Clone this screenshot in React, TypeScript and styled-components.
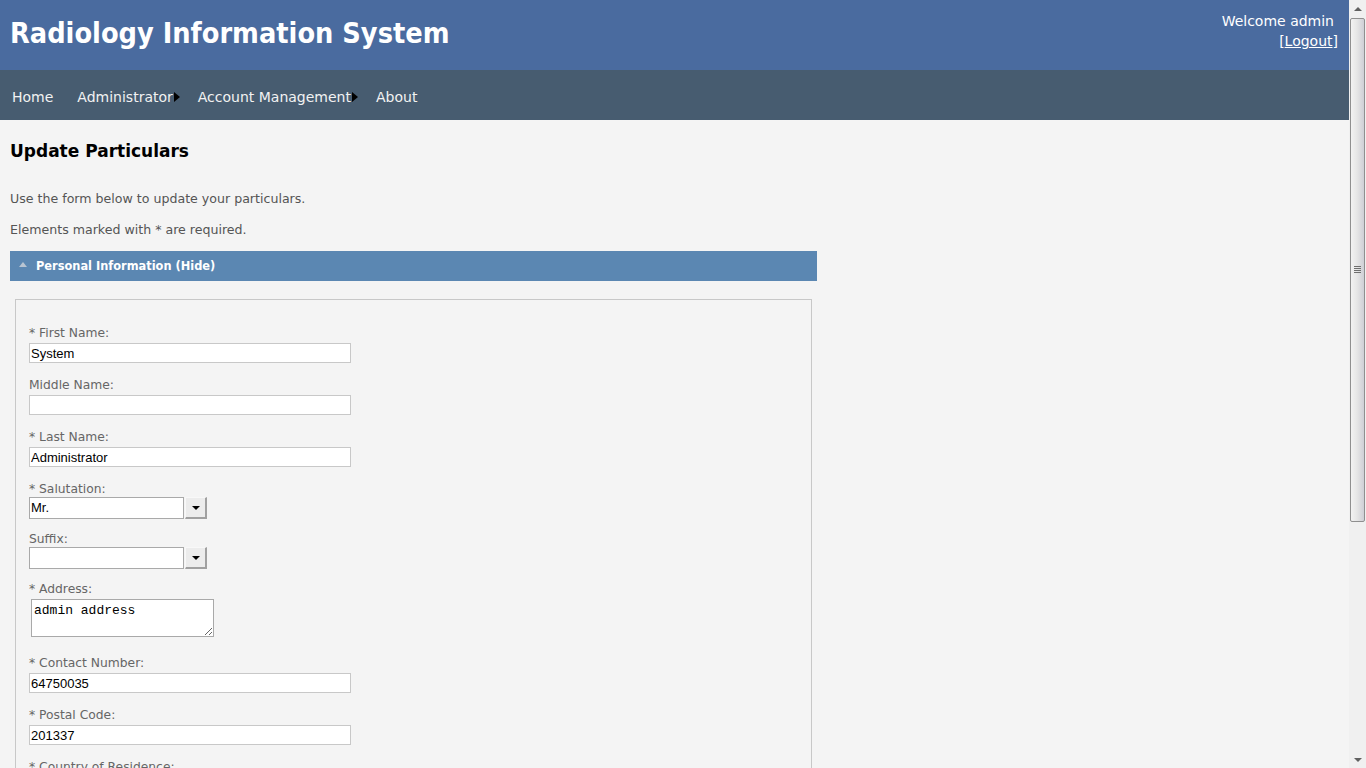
import React from "react";
import styled, { createGlobalStyle } from "styled-components";

const Global = createGlobalStyle`
  html, body { margin: 0; padding: 0; background: #f4f4f4; }
  body { font-family: "DejaVu Sans", Verdana, sans-serif; }
  * { box-sizing: border-box; }
`;

const Frame = styled.div`
  display: flex;
  align-items: flex-start;
`;

const Page = styled.div`
  flex: 1;
  min-width: 0;
`;

const Scrollbar = styled.div`
  position: sticky;
  top: 0;
  width: 17px;
  height: 100vh;
  background: #f0f0f0;
  display: flex;
  flex-direction: column;
`;

const ArrowBtn = styled.div<{ $down?: boolean }>`
  height: 17px;
  display: flex;
  align-items: center;
  justify-content: center;
  &::after {
    content: "";
    border-left: 4px solid transparent;
    border-right: 4px solid transparent;
    ${(p) =>
      p.$down
        ? "border-top: 4px solid #606060;"
        : "border-bottom: 4px solid #606060;"}
  }
`;

const Thumb = styled.div`
  margin: 1px 1px 0 1px;
  height: 504px;
  border: 1px solid #8f8f8f;
  border-radius: 2px;
  background: linear-gradient(to right, #f2f2f2 0%, #e6e6e6 45%, #cfcfd6 100%);
  display: flex;
  align-items: center;
  justify-content: center;
`;

const Grip = styled.div`
  width: 7px;
  height: 8px;
  background: repeating-linear-gradient(
    to bottom,
    #6e6e6e 0px,
    #6e6e6e 1px,
    transparent 1px,
    transparent 2px
  );
`;

const Track = styled.div`
  flex: 1;
`;

const Header = styled.header`
  height: 70px;
  background: #4a6b9f;
  display: flex;
  justify-content: space-between;
  align-items: flex-start;
  padding: 0 15px 0 10px;
`;

const Title = styled.h1`
  margin: 0;
  padding-top: 14px;
  font-family: "DejaVu Sans Condensed", "DejaVu Sans", sans-serif;
  font-stretch: condensed;
  font-size: 28.6px;
  line-height: 38px;
  font-weight: bold;
  color: #fff;
`;

const UserBox = styled.div`
  padding-top: 11px;
  display: flex;
  flex-direction: column;
  align-items: flex-end;
  color: #fff;
  font-size: 14px;
  line-height: 20px;
`;

const Logout = styled.a`
  color: #fff;
  margin-right: -4px;
  text-decoration: none;
  span { text-decoration: underline; }
`;

const Nav = styled.nav`
  height: 50px;
  background: #475c70;
  display: flex;
  align-items: center;
  padding: 4px 0 0 12px;
`;

const NavItem = styled.a<{ $sub?: boolean }>`
  color: #f2f2f2;
  font-size: 14px;
  display: flex;
  align-items: center;
  text-decoration: none;
  margin-right: ${(p) => (p.$sub ? 18 : 24)}px;
  &::after {
    content: "";
    display: ${(p) => (p.$sub ? "block" : "none")};
    margin-left: 1px;
    border-left: 6px solid #000;
    border-top: 5px solid transparent;
    border-bottom: 5px solid transparent;
  }
`;

const Main = styled.main`
  width: 817px;
  padding: 16px 0 40px 10px;
`;

const PageTitle = styled.h2`
  margin: 0;
  font-size: 17px;
  line-height: 30px;
  font-weight: bold;
  color: #000;
`;

const Intro = styled.p`
  margin: 0;
  font-size: 12.6px;
  line-height: 31px;
  color: #555;
`;

const FirstIntro = styled(Intro)`
  margin-top: 17px;
`;

const SectionBar = styled.div`
  margin-top: 6px;
  height: 30px;
  background: #5b87b2;
  display: flex;
  align-items: center;
  padding-left: 9px;
  gap: 9px;
  color: #fff;
  font-size: 11.4px;
  font-weight: bold;
  &::before {
    content: "";
    border-bottom: 5px solid #b8c4d2;
    border-left: 4px solid transparent;
    border-right: 4px solid transparent;
    margin-top: -4px;
  }
`;

const FieldSet = styled.div`
  margin: 18px 5px 0 5px;
  border: 1px solid #c8c8c8;
  border-bottom: none;
  padding: 21px 13px 0 13px;
  min-height: 700px;
`;

const Field = styled.div<{ $gap: number }>`
  margin-bottom: ${(p) => p.$gap}px;
`;

const Label = styled.label`
  display: block;
  height: 22px;
  line-height: 24px;
  font-size: 12.3px;
  color: #666;
`;

const TextInput = styled.input`
  display: block;
  width: 322px;
  height: 20px;
  border: 1px solid #c8c8c8;
  background: #fff;
  padding: 0 1px;
  font-family: "Liberation Sans", Arial, sans-serif;
  font-size: 13px;
  color: #000;
  outline: none;
`;

const SelectWrap = styled.div`
  display: flex;
  height: 22px;
  margin-top: -2px;
`;

const SelectBox = styled.div`
  width: 155px;
  height: 22px;
  background: #fff;
  border: 1px solid #a9a9a9;
  font-family: "Liberation Sans", Arial, sans-serif;
  font-size: 13px;
  line-height: 20px;
  padding-left: 1px;
  color: #000;
`;

const SelectButton = styled.div`
  width: 22px;
  height: 22px;
  margin-left: 1px;
  background: #ececec;
  border-right: 2px solid #a0a0a0;
  border-bottom: 2px solid #a0a0a0;
  border-top: 1px solid #f8f8f8;
  border-left: 1px solid #f8f8f8;
  display: flex;
  align-items: center;
  justify-content: center;
  &::after {
    content: "";
    border-top: 4px solid #000;
    border-left: 4px solid transparent;
    border-right: 4px solid transparent;
  }
`;

const TextArea = styled.textarea`
  display: block;
  margin-left: 2px;
  width: 183px;
  height: 38px;
  border: 1px solid #a9a9a9;
  background: #fff;
  font-family: "Liberation Mono", "Courier New", monospace;
  font-size: 13px;
  line-height: 16px;
  padding: 3px 2px;
  color: #000;
  outline: none;
`;

type Item = {
  kind: "input" | "select" | "area";
  label: string;
  value: string;
  gap: number;
};

const fields: Item[] = [
  { kind: "input", label: "* First Name:", value: "System", gap: 10 },
  { kind: "input", label: "Middle Name:", value: "", gap: 10 },
  { kind: "input", label: "* Last Name:", value: "Administrator", gap: 10 },
  { kind: "select", label: "* Salutation:", value: "Mr.", gap: 8 },
  { kind: "select", label: "Suffix:", value: "", gap: 8 },
  { kind: "area", label: "* Address:", value: "admin address", gap: 14 },
  { kind: "input", label: "* Contact Number:", value: "64750035", gap: 10 },
  { kind: "input", label: "* Postal Code:", value: "201337", gap: 10 },
  { kind: "select", label: "* Country of Residence:", value: "Singapore", gap: 8 },
  { kind: "select", label: "* Nationality:", value: "Singaporean", gap: 8 },
  { kind: "input", label: "* Email:", value: "admin@ris.com", gap: 10 },
];

export default function App() {
  return (
    <>
      <Global />
      <Frame>
        <Page>
          <Header>
            <Title>Radiology Information System</Title>
            <UserBox>
              <span>Welcome admin</span>
              <Logout href="#">
                [<span>Logout</span>]
              </Logout>
            </UserBox>
          </Header>
          <Nav>
            <NavItem href="#">Home</NavItem>
            <NavItem href="#" $sub>
              Administrator
            </NavItem>
            <NavItem href="#" $sub>
              Account Management
            </NavItem>
            <NavItem href="#">About</NavItem>
          </Nav>
          <Main>
            <PageTitle>Update Particulars</PageTitle>
            <FirstIntro>Use the form below to update your particulars.</FirstIntro>
            <Intro>Elements marked with * are required.</Intro>
            <SectionBar>Personal Information (Hide)</SectionBar>
            <FieldSet>
              {fields.map((f) => (
                <Field key={f.label} $gap={f.gap}>
                  <Label>{f.label}</Label>
                  {f.kind === "input" && <TextInput defaultValue={f.value} />}
                  {f.kind === "select" && (
                    <SelectWrap>
                      <SelectBox>{f.value}</SelectBox>
                      <SelectButton />
                    </SelectWrap>
                  )}
                  {f.kind === "area" && <TextArea defaultValue={f.value} />}
                </Field>
              ))}
            </FieldSet>
          </Main>
        </Page>
        <Scrollbar>
          <ArrowBtn />
          <Thumb>
            <Grip />
          </Thumb>
          <Track />
          <ArrowBtn $down />
        </Scrollbar>
      </Frame>
    </>
  );
}
